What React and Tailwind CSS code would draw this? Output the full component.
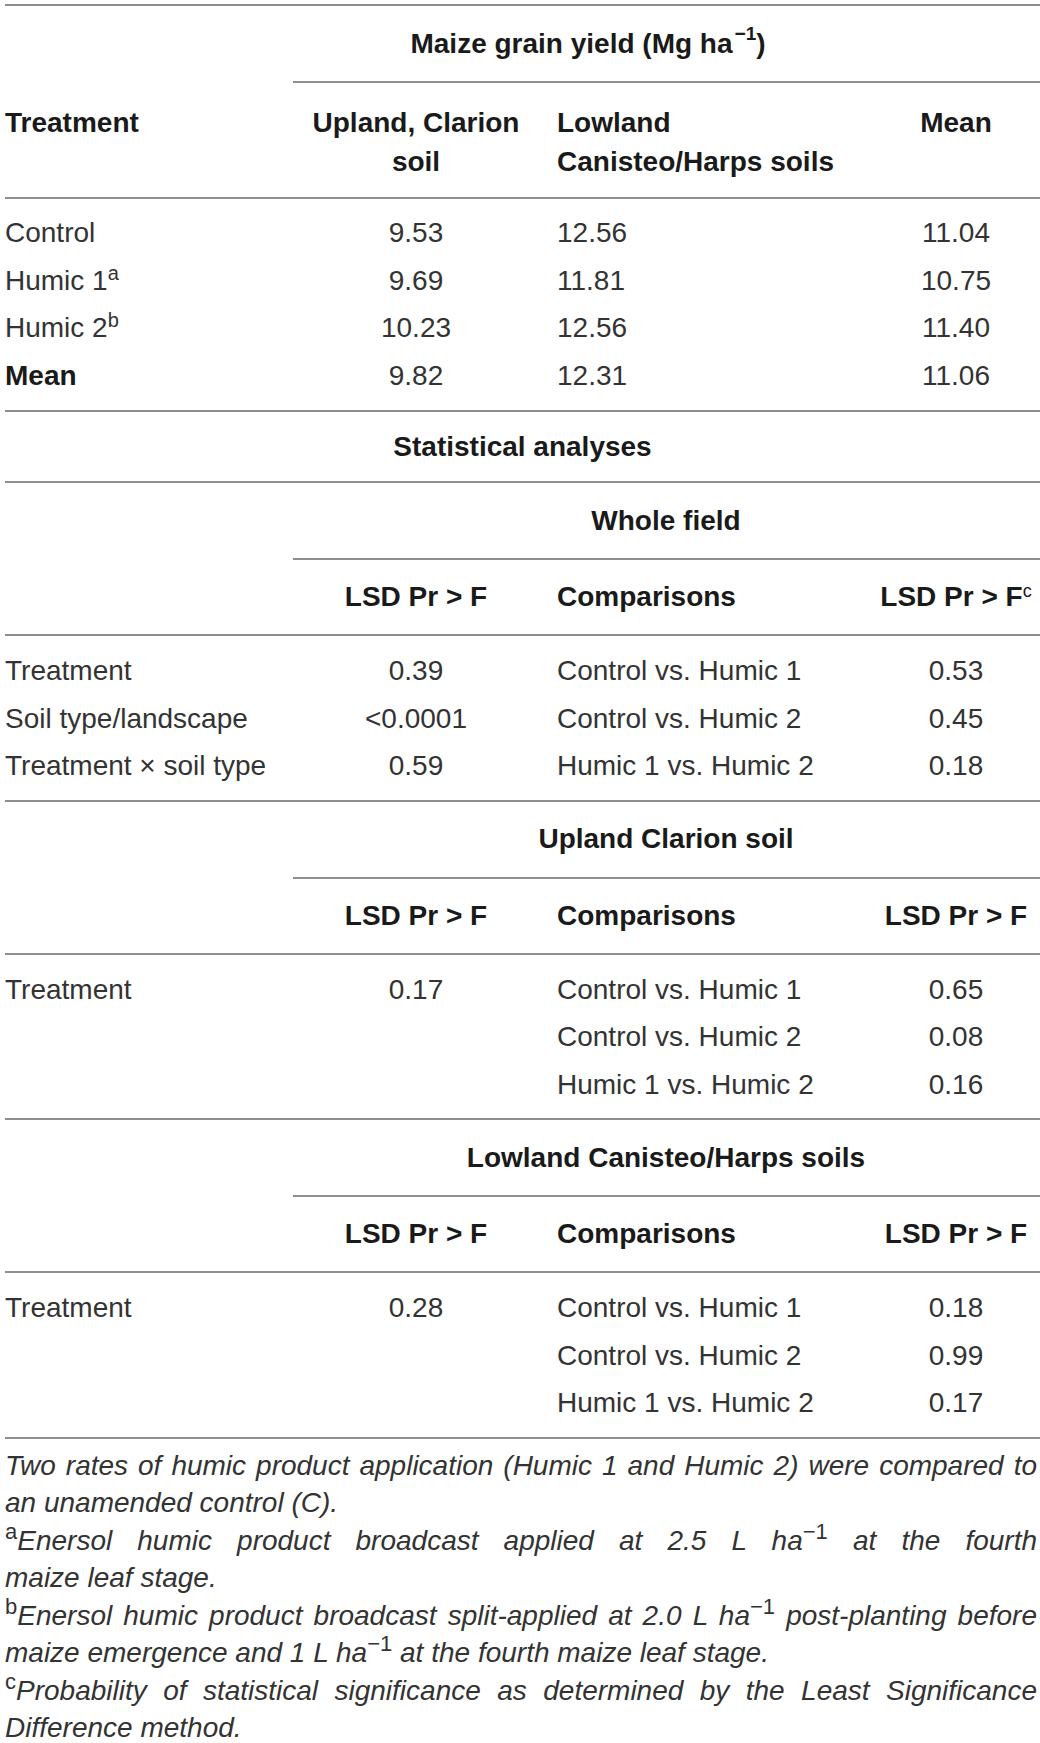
const cols = "grid grid-cols-[287px_248px_332px_168px]";

const yieldRows = [
  { name: "Control", sup: null, a: "9.53", b: "12.56", c: "11.04" },
  { name: "Humic 1", sup: "a", a: "9.69", b: "11.81", c: "10.75" },
  { name: "Humic 2", sup: "b", a: "10.23", b: "12.56", c: "11.40" },
  { name: "Mean", sup: null, a: "9.82", b: "12.31", c: "11.06", bold: true },
];

const wholeField = [
  ["Treatment", "0.39", "Control vs. Humic 1", "0.53"],
  ["Soil type/landscape", "<0.0001", "Control vs. Humic 2", "0.45"],
  ["Treatment \u00d7 soil type", "0.59", "Humic 1 vs. Humic 2", "0.18"],
];

const upland = [
  ["Treatment", "0.17", "Control vs. Humic 1", "0.65"],
  ["", "", "Control vs. Humic 2", "0.08"],
  ["", "", "Humic 1 vs. Humic 2", "0.16"],
];

const lowland = [
  ["Treatment", "0.28", "Control vs. Humic 1", "0.18"],
  ["", "", "Control vs. Humic 2", "0.99"],
  ["", "", "Humic 1 vs. Humic 2", "0.17"],
];

function Line({ partial }) {
  return <div className={`border-t-2 border-[#8e8e8e] ${partial ? "ml-[288px]" : ""}`} />;
}

function SubTitle({ children }) {
  return (
    <div className={cols}>
      <div />
      <div className="col-span-3 h-[75px] flex items-center justify-center font-bold text-[#1a1a1a]">
        {children}
      </div>
    </div>
  );
}

function LsdHeader({ sup }) {
  return (
    <div className={`${cols} h-[74px] items-center font-bold text-[#1a1a1a]`}>
      <div />
      <div className="text-center">LSD Pr &gt; F</div>
      <div className="pl-[17px]">Comparisons</div>
      <div className="text-center whitespace-nowrap">
        LSD Pr &gt; F{sup && <sup className="font-normal text-[18px]">c</sup>}
      </div>
    </div>
  );
}

function StatBody({ rows }) {
  return (
    <div className="pt-[11px] pb-[10px]">
      {rows.map((r, i) => (
        <div key={i} className={`${cols} leading-[47.5px]`}>
          <div className="whitespace-nowrap">{r[0]}</div>
          <div className="text-center">{r[1]}</div>
          <div className="pl-[17px] whitespace-nowrap">{r[2]}</div>
          <div className="text-center">{r[3]}</div>
        </div>
      ))}
    </div>
  );
}

function Mark({ children }) {
  return <sup className="not-italic text-[22px]">{children}</sup>;
}

export default function App() {
  return (
    <div className="w-[1040px] bg-white pl-[5px] pt-[4px] pb-[10px] font-['Liberation_Sans',Arial,sans-serif] text-[28px] text-[#333]">
      <Line />
      <div className={cols}>
        <div />
        <div className="col-span-2 h-[75px] flex items-center justify-center pl-[12px] font-bold text-[#1a1a1a]">
          Maize grain yield (Mg ha<sup className="text-[19px] pl-[2px]">&minus;1</sup>)
        </div>
      </div>
      <Line partial />
      <div className={`${cols} h-[114px] pt-[20px] leading-[39px] font-bold text-[#1a1a1a]`}>
        <div>Treatment</div>
        <div className="text-center">
          Upland, Clarion
          <br />
          soil
        </div>
        <div className="pl-[17px]">
          Lowland
          <br />
          Canisteo/Harps soils
        </div>
        <div className="text-center">Mean</div>
      </div>
      <Line />
      <div className="pt-[10px] pb-[11px]">
        {yieldRows.map((r) => (
          <div key={r.name} className={`${cols} leading-[47.5px]`}>
            <div className={r.bold ? "font-bold text-[#1a1a1a]" : ""}>
              {r.name}
              {r.sup && <sup className="text-[20px]">{r.sup}</sup>}
            </div>
            <div className="text-center">{r.a}</div>
            <div className="pl-[17px]">{r.b}</div>
            <div className="text-center">{r.c}</div>
          </div>
        ))}
      </div>
      <Line />
      <div className="h-[69px] flex items-center justify-center font-bold text-[#1a1a1a]">
        Statistical analyses
      </div>
      <Line />
      <SubTitle>Whole field</SubTitle>
      <Line partial />
      <LsdHeader sup />
      <Line />
      <StatBody rows={wholeField} />
      <Line />
      <SubTitle>Upland Clarion soil</SubTitle>
      <Line partial />
      <LsdHeader />
      <Line />
      <StatBody rows={upland} />
      <Line />
      <SubTitle>Lowland Canisteo/Harps soils</SubTitle>
      <Line partial />
      <LsdHeader />
      <Line />
      <StatBody rows={lowland} />
      <Line />
      <div className="pt-[8px] pr-[3px] italic leading-[37.5px] text-justify">
        <p>
          Two rates of humic product application (Humic 1 and Humic 2) were compared to an unamended
          control (C).
        </p>
        <div>
          <p className="[text-align-last:justify]">
            <Mark>a</Mark>Enersol humic product broadcast applied at 2.5 L ha<Mark>&minus;1</Mark> at the
            fourth
          </p>
          <p>maize leaf stage.</p>
        </div>
        <p>
          <Mark>b</Mark>Enersol humic product broadcast split-applied at 2.0 L ha<Mark>&minus;1</Mark>{" "}
          post-planting before maize emergence and 1 L ha<Mark>&minus;1</Mark> at the fourth maize leaf
          stage.
        </p>
        <p>
          <Mark>c</Mark>Probability of statistical significance as determined by the Least Significance
          Difference method.
        </p>
      </div>
    </div>
  );
}
